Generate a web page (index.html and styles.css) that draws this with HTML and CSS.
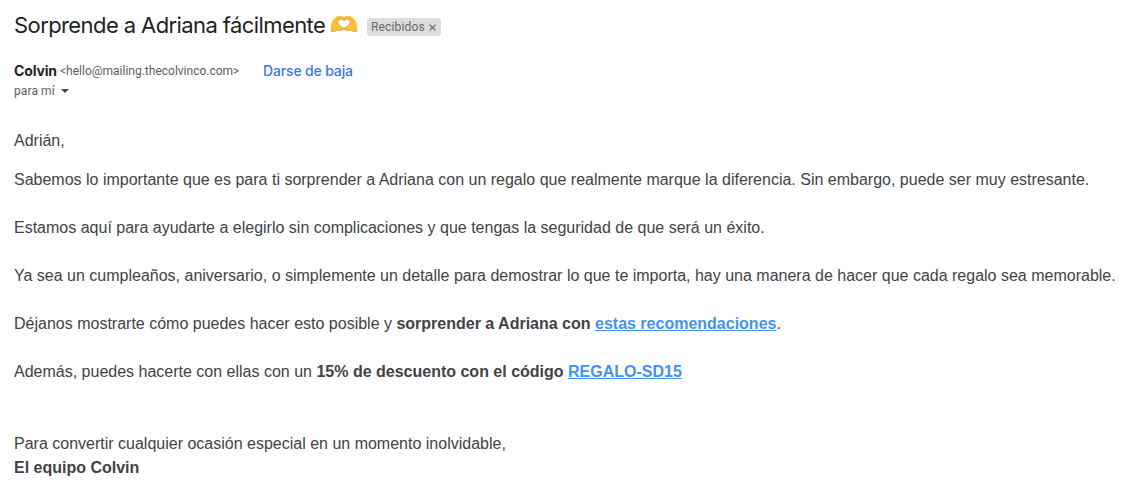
FILE: index.html
```html
<!DOCTYPE html>
<html lang="es">

<head>
  <meta charset="UTF-8">
  <meta name="viewport" content="width=device-width, initial-scale=1.0">
  <title>Sorprende a Adriana fácilmente</title>
  <link rel="stylesheet" href="styles.css">
</head>

<body>
  <header class="subject">
    <h1 class="subject-text">Sorprende a Adriana fácilmente</h1>
    <svg class="hands" width="28" height="18" viewBox="0 0 28 18">
      <path fill="#fac036" d="M.8 16.500C.6 12.500 .9 8.500 2.600 5.800C4.200 3.200 6.200 1.200 8.800 .9L12.600 1.200L14 2.200L15.400 1.200L19.200 .9C21.800 1.200 23.800 3.200 25.400 5.800C27.100 8.500 27.400 12.500 27.200 16.500L22.600 16.200C21 14.800 19 15.600 17 15.200L14 14.300L11 15.200C9 15.600 7 14.800 5.400 16.200Z"/>
      <path fill="none" stroke="#e09a38" stroke-width=".8" d="M1 16.500L5.400 16.200C7 14.800 9 15.600 11 15.200L14 14.300L17 15.200C19 15.600 21 14.800 22.600 16.200L27 16.500M14 2.200V5M8.400 3.200L11.800 2.600M19.600 3.200L16.200 2.600M5 6.400L7.200 4.200M23 6.400L20.800 4.200"/>
      <path fill="#fff" stroke="#dc9a50" stroke-width=".7" d="M14 6C12.500 3.900 8.200 4 8 7.300C7.900 9.900 11.200 11.700 14 13.100C16.800 11.700 20.100 9.900 20 7.300C19.800 4 15.500 3.900 14 6Z"/>
    </svg>
    <span class="label">
      <span class="label-name">Recibidos</span>
      <svg width="7" height="7" viewBox="0 0 7 7"><path d="M.6.600L6.400 6.400M6.400.600L.6 6.400" stroke="#666" stroke-width="1.200"/></svg>
    </span>
  </header>

  <div class="sender">
    <span class="sender-name">Colvin</span>
    <span class="sender-mail">&lt;hello@mailing.thecolvinco.com&gt;</span>
    <a class="unsubscribe">Darse de baja</a>
  </div>
  <div class="to"><span class="to-name">para mí</span><i class="arrow"></i></div>

  <div class="message">
    <p class="hello">Adrián,</p>
    <p>Sabemos lo importante que es para ti sorprender a Adriana con un regalo que realmente marque la diferencia. Sin embargo, puede ser muy estresante.</p>
    <p>Estamos aquí para ayudarte a elegirlo sin complicaciones y que tengas la seguridad de que será un éxito.</p>
    <p>Ya sea un cumpleaños, aniversario, o simplemente un detalle para demostrar lo que te importa, hay una manera de hacer que cada regalo sea memorable.</p>
    <p>Déjanos mostrarte cómo puedes hacer esto posible y <b>sorprender a Adriana con <a class="link">estas recomendaciones</a></b>.</p>
    <p>Además, puedes hacerte con ellas con un <b>15% de descuento con el código <a class="link">REGALO-SD15</a></b></p>
    <p class="bye">Para convertir cualquier ocasión especial en un momento inolvidable,<br><b>El equipo Colvin</b></p>
  </div>
</body>

</html>
```

FILE: styles.css
```css
body {
  margin: 0;
  padding: 12px 14px 0;
  background: #fff;
  font-family: Roboto, "Liberation Sans", sans-serif;
}
.subject {
  display: flex;
  align-items: center;
  height: 28px;
}
.subject-text {
  margin: 0;
  width: 311px;
  font: 400 22px/26px Inter, sans-serif;
  padding-bottom: 2px;
  letter-spacing: -0.59px;
  white-space: nowrap;
  color: #1f1f1f;
}
.hands {
  margin: -4px 0 0 5px;
}
.label {
  display: flex;
  align-items: center;
  gap: 4px;
  box-sizing: border-box;
  width: 74px;
  height: 18px;
  margin: 2px 0 0 9px;
  padding: 0 4px;
  border-radius: 4px;
  background: #ddd;
}
.label svg {
  margin-top: 1px;
}
.label-name {
  width: 54px;
  font-size: 12px;
  letter-spacing: 0.15px;
  color: #666;
}
.sender {
  display: flex;
  align-items: center;
  height: 20px;
  margin-top: 21px;
  white-space: nowrap;
}
.sender-name {
  width: 46px;
  font: 700 14px/20px Inter, sans-serif;
  letter-spacing: -0.15px;
  color: #1f1f1f;
}
.sender-mail {
  width: 203px;
  font-size: 12px;
  color: #5e5e5e;
}
.unsubscribe {
  font: 500 14px/20px Inter, sans-serif;
  letter-spacing: -0.15px;
  color: #3b78e7;
}
.to {
  display: flex;
  align-items: center;
  height: 20px;
  font-size: 12px;
  color: #5e5e5e;
}
.to-name {
  letter-spacing: 0.1px;
}
.arrow {
  margin: 0 0 0 6px;
  border: 4px solid transparent;
  border-top-color: #444;
  border-bottom: 0;
}
.message {
  margin-top: 28px;
  font: 16px/24px "Liberation Sans", Arial, sans-serif;
  color: #3f4347;
}
.message p {
  margin: 0 0 24px;
}
.message .hello {
  margin-bottom: 15px;
}
.message .bye {
  margin: 48px 0 0;
}
.link {
  color: #4391f5;
  text-decoration: underline;
}
```
